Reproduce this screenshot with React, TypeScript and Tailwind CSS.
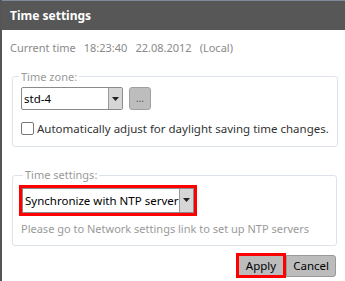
export default function App() {
    return (
        <div className="w-[345px] h-[281px] bg-white font-['Noto_Sans',sans-serif] overflow-hidden border-l-2 border-[#555555] flex flex-col">
            <div className="h-[30px] shrink-0 bg-[#575757] border-t border-[#7d8a99] flex items-center pl-[8px] text-white text-[12px] font-bold">
                Time settings
            </div>

            <div className="flex-1 flex flex-col pl-[8px] pr-[8px]">
                <div className="mt-[10px] text-[11px] text-[#8a8a8a] flex gap-[8px]">
                    <span>Current time</span>
                    <span>18:23:40</span>
                    <span>22.08.2012</span>
                    <span>(Local)</span>
                </div>

                <fieldset className="mt-[12px] ml-[2px] border border-[#dde3ea] rounded-[3px] px-[8px] pb-[9px] pt-[2px]">
                    <legend className="px-[2px] -ml-[2px] text-[11px] text-[#9a9a9a]">Time zone:</legend>
                    <div className="flex items-center gap-[6px]">
                        <div className="w-[102px] h-[23px] border border-[#8a8a8a] rounded-[2px] flex items-center bg-white">
                            <span className="flex-1 pl-[2px] text-[11.5px] text-black">std-4</span>
                            <span className="w-[14px] h-full bg-[#d6d6d6] border-l border-[#9a9a9a] flex items-center justify-center">
                                <svg width="7" height="4" viewBox="0 0 7 4"><path d="M0 0h7L3.5 4z" fill="#222" /></svg>
                            </span>
                        </div>
                        <div className="w-[22px] h-[23px] rounded-[3px] bg-[#bdbdbd] border border-[#a0a0a0] flex items-center justify-center text-[10px] text-[#555] leading-none pb-[2px]">
                            ...
                        </div>
                    </div>
                    <label className="mt-[10px] flex items-center gap-[3px] text-[11.5px] text-[#333] whitespace-nowrap">
                        <span className="w-[13px] h-[13px] border border-[#777] rounded-[2px] bg-white shrink-0" />
                        Automatically adjust for daylight saving time changes.
                    </label>
                </fieldset>

                <fieldset className="mt-[20px] ml-[2px] border border-[#dde3ea] rounded-[3px] px-[6px] pb-[8px] pt-[1px]">
                    <legend className="ml-[4px] px-[2px] text-[11px] text-[#9a9a9a]">Time settings:</legend>
                    <div className="w-[178px] border-[3px] border-[#ff0000]">
                        <div className="h-[25px] border border-[#8a8a8a] flex items-center bg-white">
                            <span className="flex-1 pl-[2px] text-[11.5px] text-black whitespace-nowrap">Synchronize with NTP server</span>
                            <span className="w-[14px] h-full bg-[#d6d6d6] border-l border-[#9a9a9a] flex items-center justify-center">
                                <svg width="7" height="4" viewBox="0 0 7 4"><path d="M0 0h7L3.5 4z" fill="#222" /></svg>
                            </span>
                        </div>
                    </div>
                    <div className="mt-[5px] ml-[2px] text-[11px] text-[#9a9a9a] whitespace-nowrap">
                        Please go to Network settings link to set up NTP servers
                    </div>
                </fieldset>

                <div className="mt-[7px] flex justify-end items-center pr-[1px]">
                    <button className="h-[25px] px-[7px] border-[3px] border-[#ff0000] bg-[#bcbcbc] text-[11.5px] text-black">Apply</button>
                    <button className="h-[22px] px-[6px] border border-[#999] rounded-r-[3px] bg-[#bcbcbc] text-[11.5px] text-black">Cancel</button>
                </div>
            </div>
        </div>
    )
}
